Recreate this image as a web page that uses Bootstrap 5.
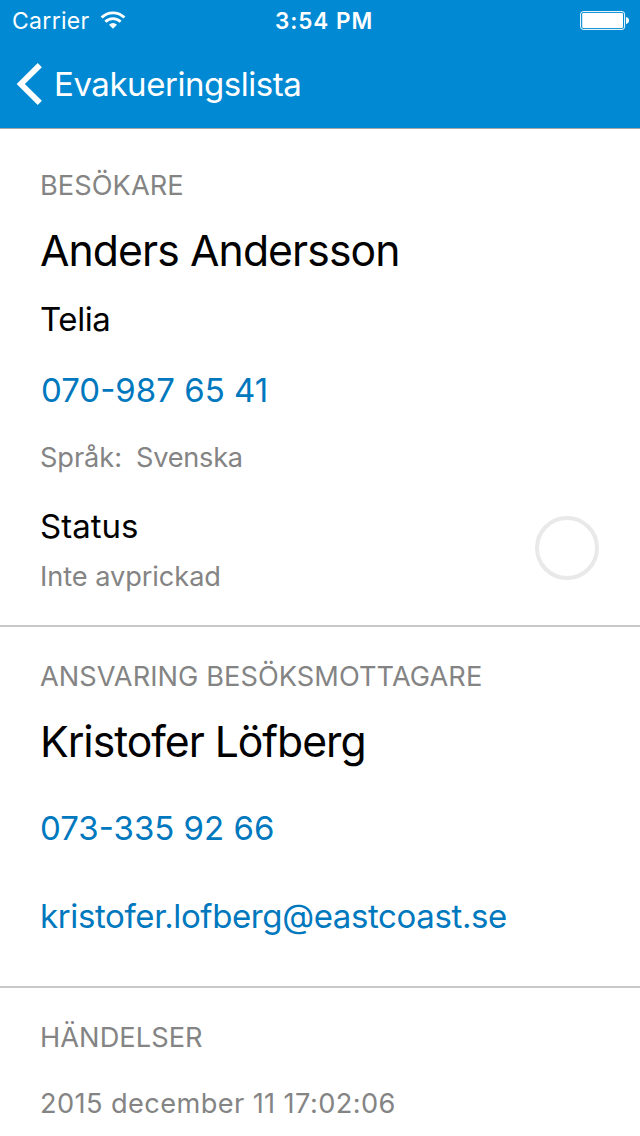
<!DOCTYPE html>
<html lang="sv">
<head>
<meta charset="utf-8">
<meta name="viewport" content="width=device-width, initial-scale=1">
<title>Evakueringslista</title>
<link href="https://cdn.jsdelivr.net/npm/bootstrap@5.3.0/dist/css/bootstrap.min.css" rel="stylesheet">
<style>
body{font-family:Inter,"Liberation Sans",sans-serif;color:#000;background:#fff;height:1136px;overflow:hidden}
.app-header{background:#0289d3;height:129px;border-bottom:1px solid #a3a7aa}
.status-bar{height:41px;padding:1px 11px 0 12px;font-size:23px;line-height:40px}
.status-bar>*{flex:1 1 0}
.carrier{letter-spacing:.3px}
.carrier svg{margin-left:10px}
.clock{font-weight:600;font-size:22.5px;letter-spacing:.95px;padding-left:7px}
.nav-row{height:85px;padding-left:16px}
.nav-label{font-size:33px;line-height:40px;margin-left:12px;letter-spacing:-.45px}
.block{padding:34px 40px 0}
.block+.block{border-top:2px solid #c8c8c8}
.block-visitor{padding-top:41px;height:496px}
.block-host{height:361px}
.t-cap{font-size:27.2px;line-height:32px;color:#848484;white-space:nowrap}
.t-head{letter-spacing:.06px}
.t-low{letter-spacing:-.07px}
.t-lang{letter-spacing:-.25px;margin-left:14px}
.t-date{letter-spacing:.4px;margin-top:34px}
.t-name{font-size:42.7px;line-height:52px;font-weight:400;letter-spacing:-.9px;margin:23px 0 0}
.t-host{letter-spacing:-1.03px}
.t-text{font-size:33px;line-height:40px}
.t-link{color:#0078be;text-decoration:none;display:block;width:max-content}
.check-ring{width:64px;height:64px;border:4px solid #e9e9e9;border-radius:50%;margin-top:10px;margin-right:1px}
</style>
</head>
<body>
<header class="app-header text-white">
  <div class="status-bar d-flex">
    <div class="carrier d-flex align-items-center"><span>Carrier</span>
      <svg width="26" height="20" viewBox="0 0 26 20" fill="none" stroke="#fff" stroke-width="2.9"><path d="M1.6 6.6a16.1 16.1 0 0 1 22.8 0"/><path d="M5.4 10.8a10.8 10.8 0 0 1 15.2 0"/><path d="M13 17.8 9 13.8q4-3.4 8 0z" fill="#fff" stroke="none"/></svg>
    </div>
    <div class="clock text-center">3:54 PM</div>
    <div class="d-flex justify-content-end align-items-center">
      <svg width="49" height="20" viewBox="0 0 49 20"><rect x=".6" y=".6" width="44" height="17.8" rx="2.6" fill="none" stroke="#fff" stroke-width="1"/><rect x="2.2" y="2.1" width="40.8" height="14.8" rx="1.2" fill="#fff"/><path d="M46 6q3 .6 3 3.5t-3 3.5z" fill="#fff"/></svg>
    </div>
  </div>
  <nav class="nav-row d-flex align-items-center">
    <svg width="26" height="44" viewBox="0 0 26 44" fill="none" stroke="#fff" stroke-width="5.8"><path d="M23.8 3.1 4.8 22l19 18.9"/></svg>
    <span class="nav-label">Evakueringslista</span>
  </nav>
</header>
<main>
  <section class="block block-visitor">
    <div class="t-cap t-head">BESÖKARE</div>
    <h1 class="t-name">Anders Andersson</h1>
    <div class="t-text" style="margin-top:22px;letter-spacing:-.4px">Telia</div>
    <a class="t-text t-link" style="margin:31px 0 0 1px" href="tel:0709876541">070-987 65 41</a>
    <div class="t-cap t-low d-flex" style="margin-top:32px"><span>Språk:</span><span class="t-lang">Svenska</span></div>
    <div class="d-flex justify-content-between align-items-start" style="margin-top:32px">
      <div>
        <div class="t-text">Status</div>
        <div class="t-cap t-low" style="margin-top:15px">Inte avprickad</div>
      </div>
      <div class="check-ring"></div>
    </div>
  </section>
  <section class="block block-host">
    <div class="t-cap t-head">ANSVARING BESÖKSMOTTAGARE</div>
    <h2 class="t-name t-host">Kristofer Löfberg</h2>
    <a class="t-text t-link" style="margin-top:40px" href="tel:0733359266">073-335 92 66</a>
    <a class="t-text t-link" style="margin-top:48px;letter-spacing:-.38px" href="mailto:kristofer.lofberg@eastcoast.se">kristofer.lofberg@eastcoast.se</a>
  </section>
  <section class="block">
    <div class="t-cap t-head">HÄNDELSER</div>
    <div class="t-cap t-date">2015 december 11 17:02:06</div>
  </section>
</main>
<script src="https://cdn.jsdelivr.net/npm/bootstrap@5.3.0/dist/js/bootstrap.bundle.min.js"></script>
</body>
</html>
